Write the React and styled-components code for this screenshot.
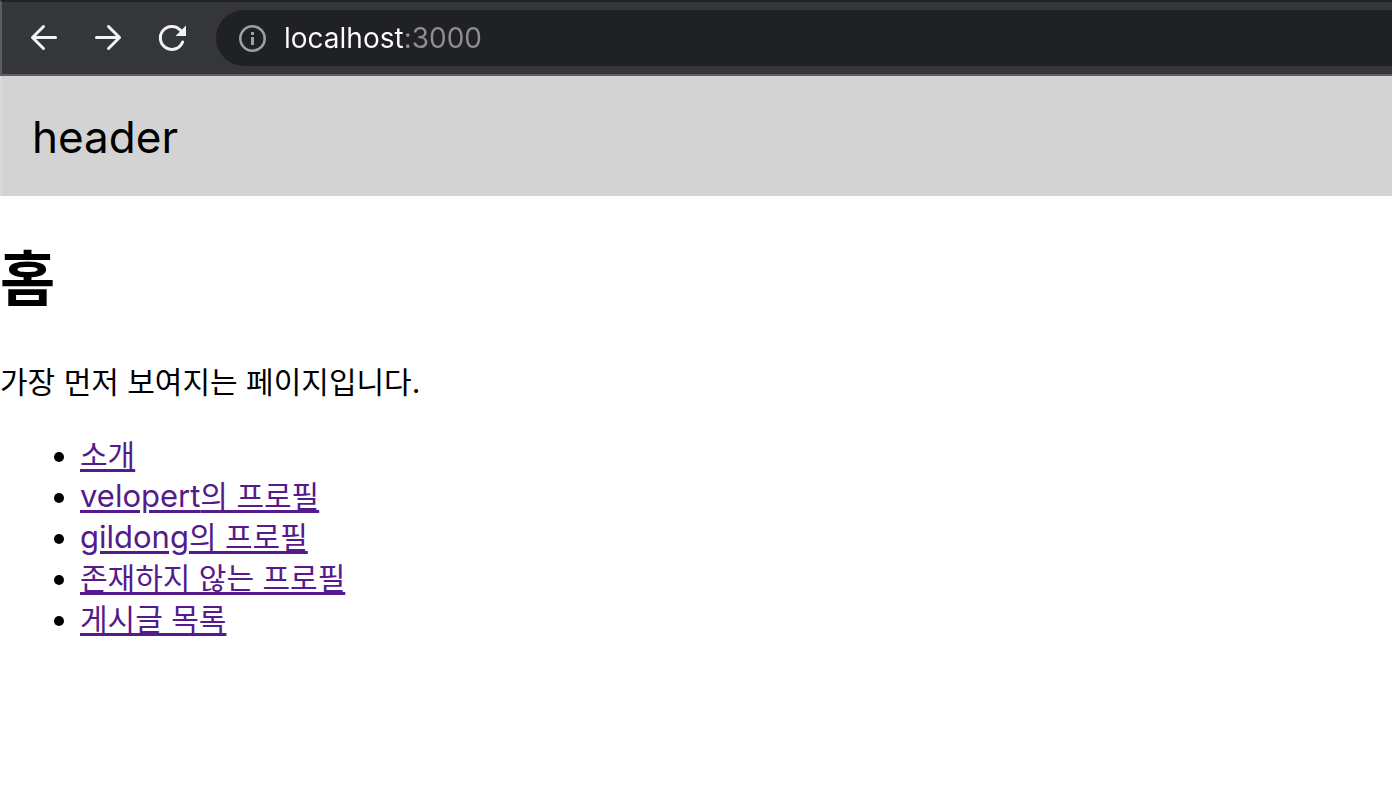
import React from 'react';
import styled, { createGlobalStyle } from 'styled-components';

const GlobalStyle = createGlobalStyle`
    body {
        background: #fff;
        color: #000;
        font-family: Inter, 'Noto Sans CJK KR', sans-serif;
        font-size: 30px;
        line-height: 41px;
        margin: 0;
    }
`;

const Toolbar = styled.div`
    align-items: center;
    background: #35363a;
    border-bottom: 2px solid #5f5e63;
    border-left: 2px solid #5b5c60;
    border-top: 2px solid #202124;
    display: flex;
    padding: 8px 0 8px 10px;
`;

const NavButtons = styled.nav`
    display: flex;
    margin-right: 12px;
`;

const IconButton = styled.button`
    align-items: center;
    background: none;
    border: 0;
    color: ${props => props.$color || '#f1f3f4'};
    cursor: pointer;
    display: flex;
    height: 56px;
    justify-content: center;
    padding: 0;
    width: ${props => props.$width || '64px'};
`;

const Icon = styled.svg`
    display: block;
    fill: none;
    height: 32px;
    stroke: currentColor;
    stroke-linecap: round;
    stroke-linejoin: round;
    stroke-width: 3;
    width: 32px;
`;

const AddressBar = styled.div`
    align-items: center;
    background: #202124;
    border-radius: 28px 0 0 28px;
    display: flex;
    flex: 1;
    gap: 16px;
    height: 56px;
    padding-left: 20px;
`;

/* The host part is white, the port after it is dimmed. */
const AddressInput = styled.input`
    background: linear-gradient(to right, #fff 120px, #8e8f91 120px);
    background-clip: text;
    border: 0;
    color: transparent;
    flex: 1;
    font-family: Inter, sans-serif;
    font-size: 28px;
    height: 40px;
    min-width: 0;
    outline: 0;
    padding: 0;
`;

const Header = styled.header`
    background: lightgray;
    border-left: 2px solid #dadada;
    font-size: 44px;
    line-height: 56px;
    padding: 33px 30px 31px;
`;

const Title = styled.h1`
    font-size: 60px;
    line-height: 80px;
    margin: 43px 0;
`;

const Text = styled.p`
    margin: 32px 0;
`;

const LinkList = styled.ul`
    margin: 32px 0;
    padding-left: 80px;
`;

const Link = styled.a`
    color: #551a8b;
    text-decoration: underline;
    text-decoration-thickness: 3px;
    text-underline-offset: 3px;
`;

const Username = styled.span`
    font-size: 31px;
    line-height: 1;
`;

const links = [
    { to: '#/about', label: '소개' },
    { to: '#/profiles/velopert', username: 'velopert', label: '의 프로필' },
    { to: '#/profiles/gildong', username: 'gildong', label: '의 프로필' },
    { to: '#/profiles/void', label: '존재하지 않는 프로필' },
    { to: '#/articles', label: '게시글 목록' }
];

/**
 * Browser toolbar with navigation buttons and the address bar.
 */
function BrowserToolbar() {
    return (
        <Toolbar>
            <NavButtons>
                <IconButton aria-label = 'Back' type = 'button'>
                    <Icon viewBox = '0 0 32 32'>
                        <path d = 'M27.5 15.5H4.5M15.5 4.5L4.5 15.5L15.5 26.5' />
                    </Icon>
                </IconButton>
                <IconButton aria-label = 'Forward' type = 'button'>
                    <Icon viewBox = '0 0 32 32'>
                        <path d = 'M4.5 15.5H27.5M16.5 4.5L27.5 15.5L16.5 26.5' />
                    </Icon>
                </IconButton>
                <IconButton aria-label = 'Reload' type = 'button'>
                    <Icon viewBox = '0 0 32 32'>
                        <path d = 'M24.5 8.3A11.5 11.5 0 1 0 26.6 20' />
                        <path
                            d = 'M30 3.5V14H19.5Z'
                            fill = 'currentColor'
                            stroke = 'none' />
                    </Icon>
                </IconButton>
            </NavButtons>
            <AddressBar>
                <IconButton
                    $color = '#9aa0a6'
                    $width = '32px'
                    aria-label = 'Site information'
                    type = 'button'>
                    <Icon viewBox = '0 0 32 32'>
                        <circle cx = '16.5' cy = '16.5' r = '12.2' strokeWidth = '2.6' />
                        <path
                            d = 'M15 10h3v3h-3zM15 15h3v8h-3z'
                            fill = 'currentColor'
                            stroke = 'none' />
                    </Icon>
                </IconButton>
                <AddressInput
                    aria-label = 'Address'
                    defaultValue = 'localhost:3000'
                    spellCheck = { false }
                    type = 'text' />
            </AddressBar>
        </Toolbar>
    );
}

/**
 * Home page with links to the other pages.
 */
function Home() {
    return (
        <main>
            <Title>홈</Title>
            <Text>가장 먼저 보여지는 페이지입니다.</Text>
            <LinkList>
                { links.map(({ to, username, label }) => (
                    <li key = { to }>
                        <Link href = { to }>
                            { username && <Username>{ username }</Username> }
                            { label }
                        </Link>
                    </li>
                )) }
            </LinkList>
        </main>
    );
}

export default function App() {
    return (
        <>
            <GlobalStyle />
            <BrowserToolbar />
            <Header>header</Header>
            <Home />
        </>
    );
}
